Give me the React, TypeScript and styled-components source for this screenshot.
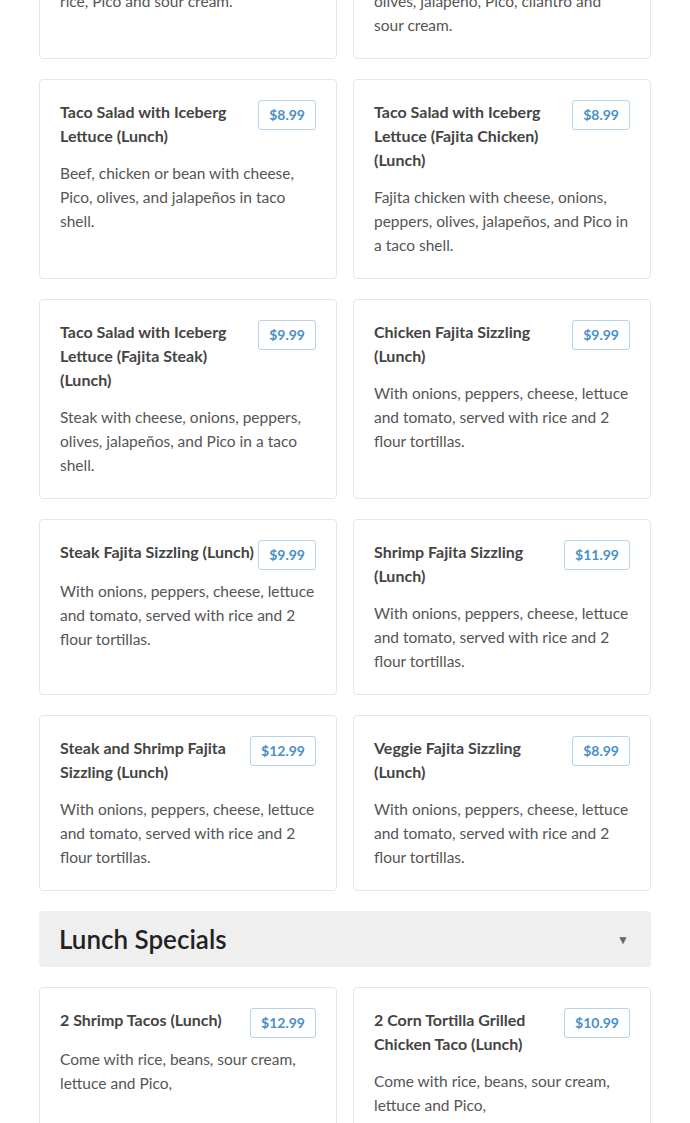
import styled, { createGlobalStyle } from "styled-components";

interface MenuItem {
  name: string;
  price: string;
  description: string;
}

// items above the Lunch Specials header (page is scrolled, first row is cut off)
const fajitaItems: MenuItem[] = [
  {
    name: "Burrito with Rice and Beans (Lunch)",
    price: "$8.99",
    description: "Beef or chicken with beans, cheese, rice, Pico and sour cream.",
  },
  {
    name: "Chimichanga Lunch Plate (Lunch)",
    price: "$8.99",
    description: "Topped with queso, lettuce, tomato, olives, jalapeño, Pico, cilantro and sour cream.",
  },
  {
    name: "Taco Salad with Iceberg Lettuce (Lunch)",
    price: "$8.99",
    description: "Beef, chicken or bean with cheese, Pico, olives, and jalapeños in taco shell.",
  },
  {
    name: "Taco Salad with Iceberg Lettuce (Fajita Chicken) (Lunch)",
    price: "$8.99",
    description:
      "Fajita chicken with cheese, onions, peppers, olives, jalapeños, and Pico in a taco shell.",
  },
  {
    name: "Taco Salad with Iceberg Lettuce (Fajita Steak) (Lunch)",
    price: "$9.99",
    description: "Steak with cheese, onions, peppers, olives, jalapeños, and Pico in a taco shell.",
  },
  {
    name: "Chicken Fajita Sizzling (Lunch)",
    price: "$9.99",
    description: "With onions, peppers, cheese, lettuce and tomato, served with rice and 2 flour tortillas.",
  },
  {
    name: "Steak Fajita Sizzling (Lunch)",
    price: "$9.99",
    description: "With onions, peppers, cheese, lettuce and tomato, served with rice and 2 flour tortillas.",
  },
  {
    name: "Shrimp Fajita Sizzling (Lunch)",
    price: "$11.99",
    description: "With onions, peppers, cheese, lettuce and tomato, served with rice and 2 flour tortillas.",
  },
  {
    name: "Steak and Shrimp Fajita Sizzling (Lunch)",
    price: "$12.99",
    description: "With onions, peppers, cheese, lettuce and tomato, served with rice and 2 flour tortillas.",
  },
  {
    name: "Veggie Fajita Sizzling (Lunch)",
    price: "$8.99",
    description: "With onions, peppers, cheese, lettuce and tomato, served with rice and 2 flour tortillas.",
  },
];

const lunchSpecials: MenuItem[] = [
  {
    name: "2 Shrimp Tacos (Lunch)",
    price: "$12.99",
    description: "Come with rice, beans, sour cream, lettuce and Pico,",
  },
  {
    name: "2 Corn Tortilla Grilled Chicken Taco (Lunch)",
    price: "$10.99",
    description: "Come with rice, beans, sour cream, lettuce and Pico,",
  },
];

export default function App() {
  return (
    <>
      <GlobalStyle />
      <Page>
        <CardsGrid>
          {fajitaItems.map((item, index) => (
            <ItemCard key={index} item={item} />
          ))}
        </CardsGrid>

        <SectionHeader>
          <h2>Lunch Specials</h2>
          <Caret>▼</Caret>
        </SectionHeader>

        <CardsGrid>
          {lunchSpecials.map((item, index) => (
            <ItemCard key={index} item={item} />
          ))}
        </CardsGrid>
      </Page>
    </>
  );
}

function ItemCard({ item }: { item: MenuItem }) {
  return (
    <Card>
      <CardHeader>
        <ItemName>{item.name}</ItemName>
        <Price>{item.price}</Price>
      </CardHeader>
      <Description>{item.description}</Description>
    </Card>
  );
}

const GlobalStyle = createGlobalStyle`
  html, body {
    margin: 0;
    padding: 0;
    background: #fff;
    overflow: hidden;
  }
  body {
    font-family: Lato, "Open Sans", "Liberation Sans", sans-serif;
    -webkit-font-smoothing: antialiased;
  }
`;

const Page = styled.main`
  padding: 0 39px 40px;
  margin-top: -117px;
  display: flex;
  flex-direction: column;
  gap: 20px;
`;

const CardsGrid = styled.div`
  display: grid;
  grid-template-columns: 1fr 1fr;
  column-gap: 16px;
  row-gap: 20px;
`;

const Card = styled.div`
  background: #fff;
  border: 1px solid #e6e6e6;
  border-radius: 4px;
  padding: 20px 20px 21px;
  display: flex;
  flex-direction: column;
`;

const CardHeader = styled.div`
  display: flex;
  justify-content: space-between;
  align-items: flex-start;
  gap: 4px;
  margin-bottom: 9px;
`;

const ItemName = styled.h3`
  margin: 0 0 4px;
  font-size: 16px;
  line-height: 24px;
  font-weight: 700;
  color: #444;
`;

const Price = styled.span`
  flex-shrink: 0;
  font-size: 14px;
  line-height: 18px;
  font-weight: 700;
  color: #4a90c8;
  border: 1px solid #b9d3e6;
  border-radius: 3px;
  padding: 5px 10px;
`;

const Description = styled.p`
  margin: 0;
  font-size: 15.5px;
  line-height: 24px;
  color: #555;
`;

const SectionHeader = styled.div`
  display: flex;
  align-items: center;
  justify-content: space-between;
  background: #efefef;
  border-radius: 4px;
  height: 56px;
  padding: 0 22px 0 20px;
  box-sizing: border-box;

  h2 {
    margin: 0;
    font-size: 26px;
    font-weight: 600;
    color: #222;
  }
`;

const Caret = styled.span`
  font-size: 12px;
  color: #666;
`;
